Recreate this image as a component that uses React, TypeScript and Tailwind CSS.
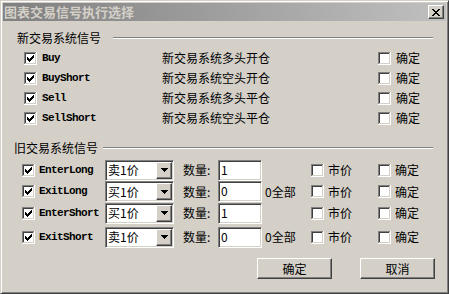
import React from "react";

const cjk = "font-['Noto_Sans_CJK_SC',sans-serif] text-[12px] leading-[14px] text-black";
const mono =
  "font-['Liberation_Mono',monospace] text-[11px] font-bold tracking-[-0.6px] leading-[13px] text-black";
const sunken =
  "border border-t-[#808080] border-l-[#808080] border-r-white border-b-white shadow-[inset_1px_1px_#404040,inset_-1px_-1px_#d4d0c8]";
const raised =
  "border border-t-white border-l-white border-r-[#404040] border-b-[#404040] shadow-[inset_-1px_-1px_#808080]";

function CheckBox({ checked = false }: { checked?: boolean }) {
  return (
    <svg width="13" height="13" viewBox="0 0 13 13" shapeRendering="crispEdges" className="shrink-0">
      <rect x="0" y="0" width="13" height="13" fill="#ffffff" />
      <path d="M0 0h12v1H1v11H0z" fill="#808080" />
      <path d="M1 1h10v1H2v9H1z" fill="#404040" />
      <path d="M12 0h1v13H0v-1h12z" fill="#ffffff" />
      <path d="M11 1h1v11H1v-1h10z" fill="#d4d0c8" />
      {checked && (
        <path
          d="M9 3h1v1H9zM8 4h2v1H8zM3 5h1v1H3zM7 5h3v1H7zM3 6h2v1H3zM6 6h3v1H6zM3 7h5v1H3zM4 8h3v1H4zM5 9h1v1H5z"
          fill="#000000"
        />
      )}
    </svg>
  );
}

function Combo({ value }: { value: string }) {
  return (
    <div className={`flex h-[21px] w-[69px] shrink-0 items-center bg-white p-[1px] ${sunken}`}>
      <span className={`flex-1 pl-[1px] ${cjk}`}>{value}</span>
      <div className={`flex h-[17px] w-[16px] items-center justify-center bg-[#d4d0c8] ${raised}`}>
        <svg width="7" height="4" viewBox="0 0 7 4" shapeRendering="crispEdges">
          <path d="M0 0h7v1H0zM1 1h5v1H1zM2 2h3v1H2zM3 3h1v1H3z" fill="#000000" />
        </svg>
      </div>
    </div>
  );
}

function Field({ value }: { value: string }) {
  return (
    <div className={`flex h-[21px] w-[44px] shrink-0 items-start bg-white p-[1px] ${sunken}`}>
      <span className={`pl-[1px] pt-[1px] ${cjk}`}>{value}</span>
    </div>
  );
}

function GroupHeader({ label, old }: { label: string; old?: boolean }) {
  return (
    <div className={`flex h-[20px] items-center pr-[13px] ${old ? "pl-[11px]" : "pl-[14px]"}`}>
      <span className={cjk}>{label}</span>
      <div className={`flex-1 border-t border-b border-t-[#808080] border-b-white ${old ? "ml-[5px]" : "ml-[12px]"}`} />
    </div>
  );
}

const newSignals = [
  { name: "Buy", desc: "新交易系统多头开仓" },
  { name: "BuyShort", desc: "新交易系统空头开仓" },
  { name: "Sell", desc: "新交易系统多头平仓" },
  { name: "SellShort", desc: "新交易系统空头平仓" },
];

const oldSignals = [
  { name: "EnterLong", price: "卖1价", qty: "1", all: false, row: "h-[22px]" },
  { name: "ExitLong", price: "买1价", qty: "0", all: true, row: "h-[21px]" },
  { name: "EnterShort", price: "买1价", qty: "1", all: false, row: "h-[22px]" },
  { name: "ExitShort", price: "卖1价", qty: "0", all: true, row: "h-[22px] mt-[2px]" },
];

export default function App() {
  return (
    <div
      className={`flex h-[294px] w-[449px] flex-col bg-[#d4d0c8] p-[2px] border border-t-[#d4d0c8] border-l-[#d4d0c8] border-r-[#404040] border-b-[#404040] shadow-[inset_1px_1px_#ffffff,inset_-1px_-1px_#808080]`}
    >
      {/* Title bar */}
      <div className="flex h-[18px] shrink-0 items-center bg-gradient-to-r from-[#808080] to-[#c0c0c0] pl-[1px] pr-[2px]">
        <span className="flex-1 font-['Noto_Sans_CJK_SC',sans-serif] text-[13px] font-bold leading-[16px] text-[#d4d0c8]">
          图表交易信号执行选择
        </span>
        <div className={`flex h-[14px] w-[16px] items-center justify-center bg-[#d4d0c8] ${raised}`}>
          <svg width="8" height="7" viewBox="0 0 8 7" shapeRendering="crispEdges">
            <path
              d="M0 0h2v1H0zM6 0h2v1H6zM1 1h2v1H1zM5 1h2v1H5zM2 2h4v1H2zM3 3h2v1H3zM2 4h4v1H2zM1 5h2v1H1zM5 5h2v1H5zM0 6h2v1H0zM6 6h2v1H6z"
              fill="#000000"
            />
          </svg>
        </div>
      </div>

      {/* New signals */}
      <div className="mt-[7px]">
        <GroupHeader label="新交易系统信号" />
      </div>
      {newSignals.map((s) => (
        <div key={s.name} className="flex h-[20px] items-center pl-[21px]">
          <CheckBox checked />
          <span className={`ml-[5px] w-[120px] ${mono}`}>{s.name}</span>
          <span className={`w-[216px] ${cjk}`}>{s.desc}</span>
          <CheckBox />
          <span className={`ml-[5px] ${cjk}`}>确定</span>
        </div>
      ))}

      {/* Old signals */}
      <div className="mt-[10px]">
        <GroupHeader label="旧交易系统信号" old />
      </div>
      <div className="mt-[1px] flex flex-col">
        {oldSignals.map((s) => (
          <div key={s.name} className={`flex items-center pl-[19px] ${s.row}`}>
            <CheckBox checked />
            <span className={`ml-[4px] w-[66px] ${mono}`}>{s.name}</span>
            <Combo value={s.price} />
            <span className={`ml-[9px] w-[35px] ${cjk}`}>数量:</span>
            <Field value={s.qty} />
            <span className={`ml-[3px] w-[46px] ${cjk}`}>{s.all ? "0全部" : ""}</span>
            <CheckBox />
            <span className={`ml-[4px] w-[50px] ${cjk}`}>市价</span>
            <CheckBox />
            <span className={`ml-[4px] ${cjk}`}>确定</span>
          </div>
        ))}
      </div>

      {/* Buttons */}
      <div className="mt-[10px] flex justify-end gap-[28px] pr-[11px]">
        <button className={`flex h-[21px] w-[75px] items-center justify-center bg-[#d4d0c8] ${raised} ${cjk}`}>
          确定
        </button>
        <button className={`flex h-[21px] w-[75px] items-center justify-center bg-[#d4d0c8] ${raised} ${cjk}`}>
          取消
        </button>
      </div>
    </div>
  );
}
